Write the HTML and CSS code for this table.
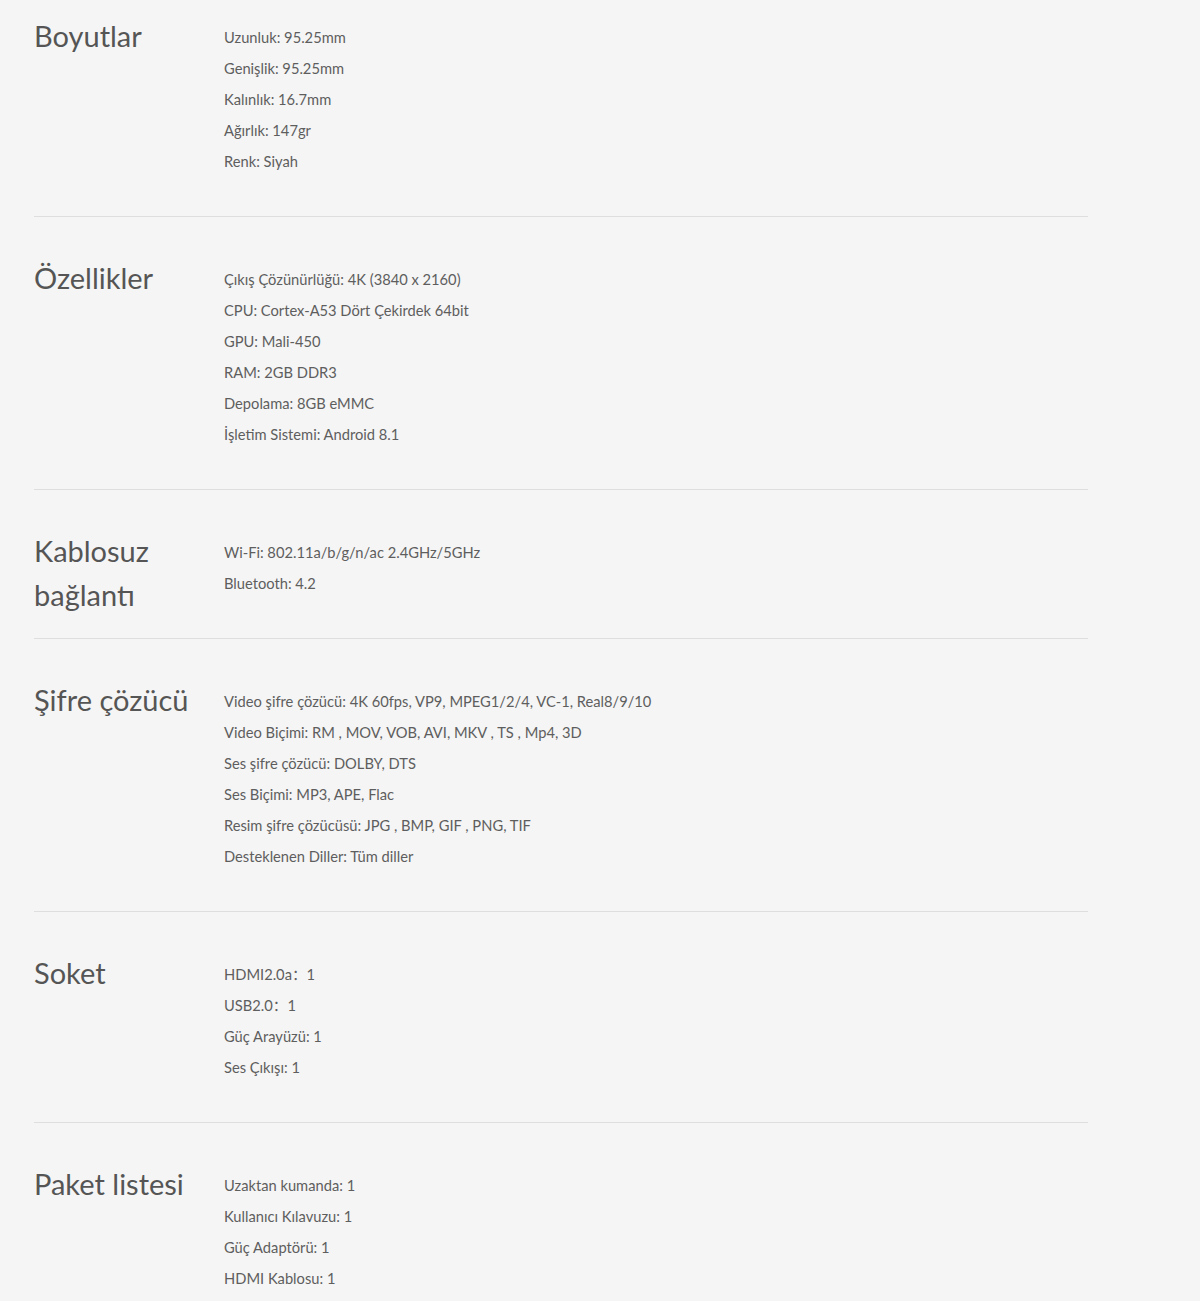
FILE: index.html
```html
<!DOCTYPE html>
<html lang="tr">
<head>
<meta charset="utf-8">
<link rel="stylesheet" href="styles.css">
</head>
<body>
<div class="specs">
  <section class="spec">
    <h2 class="spec-title">Boyutlar</h2>
    <ul class="spec-list">
      <li>Uzunluk: 95.25mm</li>
      <li>Genişlik: 95.25mm</li>
      <li>Kalınlık: 16.7mm</li>
      <li>Ağırlık: 147gr</li>
      <li>Renk: Siyah</li>
    </ul>
  </section>
  <section class="spec">
    <h2 class="spec-title">Özellikler</h2>
    <ul class="spec-list">
      <li>Çıkış Çözünürlüğü: 4K (3840 x 2160)</li>
      <li>CPU: Cortex-A53 Dört Çekirdek 64bit</li>
      <li>GPU: Mali-450</li>
      <li>RAM: 2GB DDR3</li>
      <li>Depolama: 8GB eMMC</li>
      <li>İşletim Sistemi: Android 8.1</li>
    </ul>
  </section>
  <section class="spec">
    <h2 class="spec-title">Kablosuz bağlantı</h2>
    <ul class="spec-list">
      <li>Wi-Fi: 802.11a/b/g/n/ac 2.4GHz/5GHz</li>
      <li>Bluetooth: 4.2</li>
    </ul>
  </section>
  <section class="spec">
    <h2 class="spec-title">Şifre çözücü</h2>
    <ul class="spec-list">
      <li>Video şifre çözücü: 4K 60fps, VP9, MPEG1/2/4, VC-1, Real8/9/10</li>
      <li>Video Biçimi: RM , MOV, VOB, AVI, MKV , TS , Mp4, 3D</li>
      <li>Ses şifre çözücü: DOLBY, DTS</li>
      <li>Ses Biçimi: MP3, APE, Flac</li>
      <li>Resim şifre çözücüsü: JPG , BMP, GIF , PNG, TIF</li>
      <li>Desteklenen Diller: Tüm diller</li>
    </ul>
  </section>
  <section class="spec">
    <h2 class="spec-title">Soket</h2>
    <ul class="spec-list">
      <li>HDMI2.0a：1</li>
      <li>USB2.0：1</li>
      <li>Güç Arayüzü: 1</li>
      <li>Ses Çıkışı: 1</li>
    </ul>
  </section>
  <section class="spec">
    <h2 class="spec-title">Paket listesi</h2>
    <ul class="spec-list">
      <li>Uzaktan kumanda: 1</li>
      <li>Kullanıcı Kılavuzu: 1</li>
      <li>Güç Adaptörü: 1</li>
      <li>HDMI Kablosu: 1</li>
    </ul>
  </section>
</div>
</body>
</html>
```
FILE: styles.css
```css
html, body {
  margin: 0;
  padding: 0;
  background: #f5f5f5;
}
body {
  font-family: "Lato", "Noto Sans CJK SC", sans-serif;
  color: #5e5e5e;
}
.specs {
  width: 1054px;
  margin-left: 34px;
}
.spec {
  display: flex;
  padding: 39px 0 20.5px;
  border-bottom: 1px solid #dedede;
}
.spec:first-child {
  padding-top: 14px;
}
.spec-title {
  width: 190px;
  flex: none;
  margin: 0;
  font-size: 29px;
  line-height: 44px;
  font-weight: 400;
  color: #555;
}
.spec-list {
  list-style: none;
  margin: 8px 0 18.5px;
  padding: 0;
  font-size: 14.7px;
  line-height: 31px;
}
```
